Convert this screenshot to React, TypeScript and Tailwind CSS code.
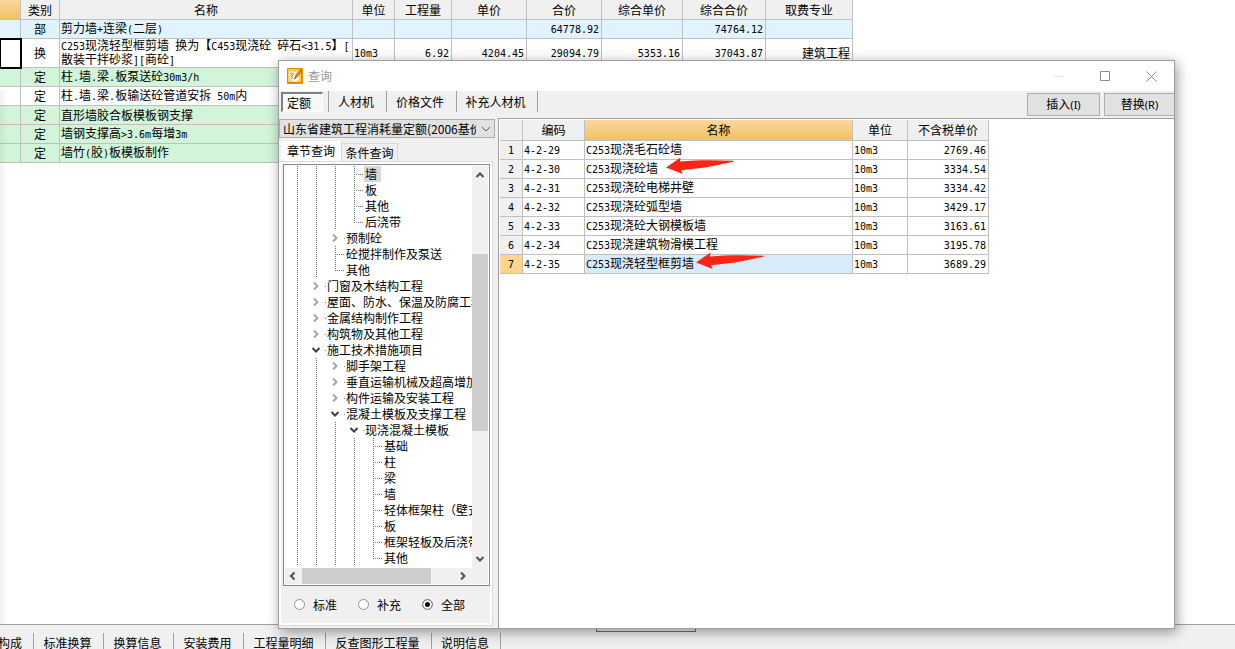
import { Fragment, useState } from 'react';

const columns = [
  { label: '', width: 'w-[21px]' },
  { label: '类别', width: 'w-[39px]' },
  { label: '名称', width: 'w-[293px]' },
  { label: '单位', width: 'w-[42px]' },
  { label: '工程量', width: 'w-[57px]' },
  { label: '单价', width: 'w-[75px]' },
  { label: '合价', width: 'w-[75px]' },
  { label: '综合单价', width: 'w-[81px]' },
  { label: '综合合价', width: 'w-[83px]' },
  { label: '取费专业', width: 'w-[87px]' },
];

const budgetRows = [
  { bg: 'bg-[#e1f3ff]', cells: ['部', '剪力墙+连梁(二层)', '', '', '', '64778.92', '', '74764.12', ''] },
  {
    bg: 'bg-white',
    tall: true,
    cells: ['换', 'C253现浇轻型框剪墙 换为【C453现浇砼 碎石<31.5】[散装干拌砂浆][商砼]', '10m3', '6.92', '4204.45', '29094.79', '5353.16', '37043.87', '建筑工程'],
  },
  { bg: 'bg-[#d2f4d9]', cells: ['定', '柱.墙.梁.板泵送砼30m3/h', '', '', '', '', '', '', ''] },
  { bg: 'bg-white', cells: ['定', '柱.墙.梁.板输送砼管道安拆 50m内', '', '', '', '', '', '', ''] },
  { bg: 'bg-[#d2f4d9]', cells: ['定', '直形墙胶合板模板钢支撑', '', '', '', '', '', '', ''] },
  { bg: 'bg-[#d2f4d9]', cells: ['定', '墙钢支撑高>3.6m每增3m', '', '', '', '', '', '', ''] },
  { bg: 'bg-[#d2f4d9]', cells: ['定', '墙竹(胶)板模板制作', '', '', '', '', '', '', ''] },
];

type Kind = 'leaf' | 'last' | 'closed' | 'open';
type TreeNode = { label: string; depth: number; kind: Kind; selected?: boolean };

const tree: TreeNode[] = [
  { label: '墙', depth: 4, kind: 'leaf', selected: true },
  { label: '板', depth: 4, kind: 'leaf' },
  { label: '其他', depth: 4, kind: 'leaf' },
  { label: '后浇带', depth: 4, kind: 'last' },
  { label: '预制砼', depth: 3, kind: 'closed' },
  { label: '砼搅拌制作及泵送', depth: 3, kind: 'leaf' },
  { label: '其他', depth: 3, kind: 'last' },
  { label: '门窗及木结构工程', depth: 2, kind: 'closed' },
  { label: '屋面、防水、保温及防腐工程', depth: 2, kind: 'closed' },
  { label: '金属结构制作工程', depth: 2, kind: 'closed' },
  { label: '构筑物及其他工程', depth: 2, kind: 'closed' },
  { label: '施工技术措施项目', depth: 2, kind: 'open' },
  { label: '脚手架工程', depth: 3, kind: 'closed' },
  { label: '垂直运输机械及超高增加', depth: 3, kind: 'closed' },
  { label: '构件运输及安装工程', depth: 3, kind: 'closed' },
  { label: '混凝土模板及支撑工程', depth: 3, kind: 'open' },
  { label: '现浇混凝土模板', depth: 4, kind: 'open' },
  { label: '基础', depth: 5, kind: 'leaf' },
  { label: '柱', depth: 5, kind: 'leaf' },
  { label: '梁', depth: 5, kind: 'leaf' },
  { label: '墙', depth: 5, kind: 'leaf' },
  { label: '轻体框架柱（壁式柱）', depth: 5, kind: 'leaf' },
  { label: '板', depth: 5, kind: 'leaf' },
  { label: '框架轻板及后浇带', depth: 5, kind: 'leaf' },
  { label: '其他', depth: 5, kind: 'last' },
];

const quotaRows = [
  { code: '4-2-29', name: 'C253现浇毛石砼墙', price: '2769.46' },
  { code: '4-2-30', name: 'C253现浇砼墙', price: '3334.54', arrow: 'left-[80px]' },
  { code: '4-2-31', name: 'C253现浇砼电梯井壁', price: '3334.42' },
  { code: '4-2-32', name: 'C253现浇砼弧型墙', price: '3429.17' },
  { code: '4-2-33', name: 'C253现浇砼大钢模板墙', price: '3163.61' },
  { code: '4-2-34', name: 'C253现浇建筑物滑模工程', price: '3195.78' },
  { code: '4-2-35', name: 'C253现浇轻型框剪墙', price: '3689.29', arrow: 'left-[110px]' },
];

const toolTabs = [
  { label: '人材机', width: 'w-[58px]' },
  { label: '价格文件', width: 'w-[70px]' },
  { label: '补充人材机', width: 'w-[81px]' },
];

const bottomTabs = [
  { label: '标准换算', width: 'w-[70px]' },
  { label: '换算信息', width: 'w-[70px]' },
  { label: '安装费用', width: 'w-[70px]' },
  { label: '工程量明细', width: 'w-[82px]' },
  { label: '反查图形工程量', width: 'w-[106px]' },
  { label: '说明信息', width: 'w-[69px]' },
];

// half-width characters take exactly half of a 12px ideograph
function Mixed({ text }: { text: string }) {
  return (
    <>
      {text.split(/([\x20-\x7e]+)/).map((part, i) =>
        i % 2 ? (
          <span key={i} className="font-['DejaVu_Sans_Mono',monospace] text-[10px]">{part}</span>
        ) : (
          <Fragment key={i}>{part}</Fragment>
        )
      )}
    </>
  );
}

function BudgetTable() {
  return (
    <table className="w-[853px] table-fixed border-separate border-spacing-0">
      <thead>
        <tr className="h-[20px]">
          {columns.map((col, i) => (
            <th
              key={i}
              className={`${col.width} border-r border-b border-[#c0c0c0] p-0 font-normal ${
                i === 0 ? 'bg-linear-to-b from-[#fad79c] to-[#f2c161]' : 'bg-[#f0f0f0]'
              }`}
            >
              {col.label}
            </th>
          ))}
        </tr>
      </thead>
      <tbody>
        {budgetRows.map((row, r) => (
          <tr key={r} className={`${row.tall ? 'h-[29px]' : 'h-[19px]'} ${row.bg}`}>
            <td className={`border-r border-b border-[#c0c0c0] p-0 ${row.tall ? 'outline-2 -outline-offset-1 outline-black' : ''}`} />
            {row.cells.map((cell, i) => (
              <td
                key={i}
                className={`border-r border-b border-[#c0c0c0] py-0 ${
                  row.tall && i === 1 ? 'leading-[12px] [line-break:anywhere]' : 'leading-[14px] whitespace-nowrap'
                } ${i === 0 ? 'px-0 text-center' : i > 2 ? 'px-[2px] text-right' : 'px-px'}`}
              >
                <Mixed text={cell} />
              </td>
            ))}
          </tr>
        ))}
      </tbody>
    </table>
  );
}

function Chevron({ dir, className = '' }: { dir: 'up' | 'down' | 'left' | 'right'; className?: string }) {
  const paths = {
    up: 'M1.5 7 5 3.5 8.5 7',
    down: 'M1.5 3 5 6.5 8.5 3',
    left: 'M6.5 1.5 3 5 6.5 8.5',
    right: 'M3 1.5 6.5 5 3 8.5',
  };
  return (
    <svg viewBox="0 0 10 10" className={`size-[10px] shrink-0 ${className}`} fill="none" stroke="currentColor" strokeWidth="2">
      <path d={paths[dir]} />
    </svg>
  );
}

function Guide({ kind }: { kind: Kind | 'line' }) {
  if (kind === 'closed' || kind === 'open') {
    return (
      <span className="flex w-[19px] shrink-0 items-center justify-between pl-[4px]">
        <Chevron dir={kind === 'open' ? 'down' : 'right'} className={kind === 'open' ? 'text-[#404040]' : 'text-[#a6a6a6]'} />
        <span className="size-px bg-[#808080]" />
      </span>
    );
  }
  return (
    <svg width="19" height="16" className="shrink-0" fill="none" stroke="#707070" strokeDasharray="1 1">
      <path d={kind === 'last' ? 'M9.5 0V8' : 'M9.5 0V16'} />
      {kind !== 'line' && <path d="M9 8.5H18" />}
    </svg>
  );
}

function QuotaTree() {
  return (
    <div className="flex min-h-0 flex-1 flex-col border border-[#828790] bg-white p-px">
      <div className="flex min-h-0 flex-1">
        <ul className="min-w-0 flex-1 overflow-hidden pl-[3px]">
          {tree.map((node, i) => (
            <li key={i} className="flex h-[16px] whitespace-nowrap">
              {Array.from({ length: node.depth - 1 }, (_, g) => (
                <Guide key={g} kind="line" />
              ))}
              <Guide kind={node.kind} />
              <span className={`pr-[4px] pl-px leading-[16px] ${node.selected ? 'bg-[#d9d9d9]' : ''}`}>{node.label}</span>
            </li>
          ))}
        </ul>
        <div className="flex w-[16px] flex-col items-center bg-[#f0f0f0] py-[4px] text-[#505050]">
          <Chevron dir="up" />
          <div className="flex min-h-0 w-full flex-1 flex-col pt-[74px]">
            <div className="h-[70%] max-h-[177px] bg-[#cdcdcd]" />
          </div>
          <Chevron dir="down" />
        </div>
      </div>
      <div className="flex h-[16px] items-center bg-[#f0f0f0] pr-[20px] pl-[3px] text-[#505050]">
        <Chevron dir="left" />
        <div className="flex h-full flex-1 pl-[4px]">
          <div className="h-full w-[129px] bg-[#cdcdcd]" />
        </div>
        <Chevron dir="right" />
      </div>
    </div>
  );
}

function RedArrow({ className }: { className: string }) {
  return (
    <svg viewBox="0 0 70 18" className={`absolute top-[-3px] h-[18px] w-[70px] ${className}`} fill="#ff2413">
      <path d="M1 10.5 15.5 .5 15 4.4C32 3 50 3 68 3.8L68.500 4.800C58 6.600 50 9 38 10.800L16 13.300 17.600 17Z" />
    </svg>
  );
}

function QuotaTable() {
  const cell = 'border-r border-b border-[#c0c0c0] py-0 leading-[14px]';
  return (
    <table className="w-[489px] table-fixed border-separate border-spacing-0">
      <thead>
        <tr className="h-[21px] bg-[#f0f0f0]">
          <th className={`${cell} w-[23px]`} />
          <th className={`${cell} w-[62px] px-0 font-normal`}>编码</th>
          <th className={`${cell} w-[268px] bg-linear-to-b from-[#fad79c] to-[#f2c161] px-0 font-normal`}>名称</th>
          <th className={`${cell} w-[55px] px-0 font-normal`}>单位</th>
          <th className={`${cell} w-[81px] px-0 font-normal`}>不含税单价</th>
        </tr>
      </thead>
      <tbody>
        {quotaRows.map((row, i) => {
          const active = i === quotaRows.length - 1;
          return (
            <tr key={row.code} className="h-[19px]">
              <td className={`${cell} px-0 text-center ${active ? 'bg-[#ffd58d]' : 'bg-[#f0f0f0]'}`}>
                <Mixed text={String(i + 1)} />
              </td>
              <td className={`${cell} px-px`}><Mixed text={row.code} /></td>
              <td className={`${cell} relative px-px ${active ? 'bg-[#d9eaf9]' : ''}`}>
                <Mixed text={row.name} />
                {row.arrow && <RedArrow className={row.arrow} />}
              </td>
              <td className={`${cell} px-px`}><Mixed text="10m3" /></td>
              <td className={`${cell} px-[2px] text-right`}><Mixed text={row.price} /></td>
            </tr>
          );
        })}
      </tbody>
    </table>
  );
}

function AppIcon() {
  return (
    <svg viewBox="0 0 16 16" className="size-[16px]">
      <rect width="16" height="16" rx="1" fill="#d98a0c" />
      <rect x="1" y="1" width="13" height="13" fill="#ffcf3a" />
      <path d="M2 4.500 5 3 7.500 4 10.500 3 12 4v7.500L9 13.500 4 13 2.500 11Z" fill="#fffbe8" />
      <path d="M3 5.500 4.500 6.500M3.500 9 6 7.500M5 4.500 6.500 7M4 11.500 6 9.500" stroke="#b0622a" fill="none" />
      <path d="M13.500 1.500 9.500 6 7.500 11 11 8 14 3Z" fill="#f3a01c" stroke="#8a3c08" strokeWidth=".7" />
      <path d="M.5 15.500h15V2" fill="none" stroke="#f08c00" />
    </svg>
  );
}

function QueryDialog() {
  const [scope, setScope] = useState('全部');

  return (
    <section
      role="dialog"
      aria-label="查询"
      className="absolute top-[60px] right-[60px] bottom-[20px] left-[278px] flex flex-col border border-[#a0a0a0] bg-[#f0f0f0] shadow-[2px_3px_12px_rgba(0,0,0,0.4)]"
    >
      <header className="flex h-[30px] shrink-0 items-center bg-white pl-[8px]">
        <AppIcon />
        <h1 className="flex-1 pl-[5px] text-[#999999]">查询</h1>
        <div className="flex text-[#8c8c8c]">
          <button type="button" aria-label="最小化" className="flex w-[46px] items-center justify-center">
            <svg width="11" height="11" stroke="#e2e2e2"><path d="M0 5.5h10" /></svg>
          </button>
          <button type="button" aria-label="最大化" className="flex w-[46px] items-center justify-center">
            <svg width="11" height="11" fill="none" stroke="currentColor"><path d="M.5 .5h9v9h-9Z" /></svg>
          </button>
          <button type="button" aria-label="关闭" className="flex w-[46px] items-center justify-center">
            <svg width="11" height="11" fill="none" stroke="currentColor"><path d="M.5 .5l10 10M10.5 .5l-10 10" /></svg>
          </button>
        </div>
      </header>

      <div className="flex h-[27px] shrink-0">
        <div className="flex h-[21px] flex-1">
          <div className="border-r border-[#a0a0a0] pt-px pr-[5px] pl-[2px]">
            <button type="button" className="flex h-[20px] w-[42px] items-center justify-start border-t-2 border-r border-b border-l-2 border-[#808080] border-r-white border-b-white bg-[#f8f8f8] pl-[4px]">
              定额
            </button>
          </div>
          {toolTabs.map((tab) => (
            <button key={tab.label} type="button" className={`${tab.width} border-r border-[#a0a0a0] pr-[3px] text-center`}>
              {tab.label}
            </button>
          ))}
        </div>
        <div className="flex items-center gap-[4px]">
          <button type="button" className="h-[23px] w-[73px] border border-[#adadad] bg-[#e1e1e1]">
            插入<span className="font-['Noto_Sans',sans-serif] text-[11px]">(I)</span>
          </button>
          <button type="button" className="h-[23px] w-[70px] border border-r-0 border-[#adadad] bg-[#e1e1e1]">
            替换<span className="font-['Noto_Sans',sans-serif] text-[11px]">(R)</span>
          </button>
        </div>
      </div>

      <div className="flex min-h-0 flex-1">
        <div className="flex w-[219px] shrink-0 flex-col pr-[3px]">
          <div className="relative mt-px flex h-[19px] shrink-0">
            <select
              aria-label="定额库"
              className="w-full appearance-none overflow-hidden border border-[#adadad] bg-[#e1e1e1] pr-[18px] pl-[3px] text-[12px] leading-[17px]"
            >
              <option>山东省建筑工程消耗量定额(2006基价)</option>
            </select>
            <svg viewBox="0 0 10 10" className="pointer-events-none absolute top-[5px] right-[4px] size-[10px]" fill="none" stroke="#606060">
              <path d="M1 3 5 7 9 3" />
            </svg>
          </div>
          <div className="mt-[3px] flex h-[20px] shrink-0 items-end pl-[2px]">
            <button type="button" className="h-[20px] w-[61px] border-r border-[#d9d9d9] bg-white">章节查询</button>
            <button type="button" className="h-[18px] w-[56px] border-t border-r border-[#d9d9d9]">条件查询</button>
          </div>
          <div className="mr-[2px] mb-[2px] flex min-h-0 flex-1 flex-col border-t border-r border-b border-[#d9d9d9] bg-white px-[2px] pt-[2px] pb-[2px]">
            <div className="flex min-h-0 flex-1 flex-col bg-[#f0f0f0] pl-[2px]">
              <QuotaTree />
              <div className="flex h-[37px] shrink-0 items-center gap-[21px] pl-[11px]">
                {['标准', '补充', '全部'].map((item) => (
                  <label key={item} className="flex items-center gap-[8px]">
                    <input
                      type="radio"
                      name="scope"
                      checked={scope === item}
                      onChange={() => setScope(item)}
                      className="size-[11px] appearance-none rounded-full border border-[#909090] bg-white checked:bg-black checked:shadow-[inset_0_0_0_2px_#fff]"
                    />
                    {item}
                  </label>
                ))}
              </div>
            </div>
          </div>
        </div>
        <div className="min-w-0 flex-1 overflow-hidden border-t border-l border-[#a0a0a0] bg-white pt-px pl-px">
          <QuotaTable />
        </div>
      </div>
    </section>
  );
}

export default function App() {
  return (
    <main className="relative flex h-screen flex-col overflow-hidden bg-white font-['Noto_Sans_CJK_SC',sans-serif] text-[12px] leading-[14px] text-black">
      <div className="min-h-0 flex-1 overflow-hidden">
        <BudgetTable />
      </div>
      <div className="pointer-events-none absolute top-[90px] bottom-[25px] left-0 w-[8px] bg-linear-to-r from-black/5 to-transparent" />
      <nav className="flex h-[25px] shrink-0 overflow-hidden border-t border-[#a0a0a0] bg-[#f0f0f0] pt-[8px]">
        <button type="button" className="flex h-[20px] w-[34px] shrink-0 items-center justify-end overflow-hidden border-r border-[#a0a0a0] pr-[11px] whitespace-nowrap">
          构成
        </button>
        {bottomTabs.map((tab) => (
          <button key={tab.label} type="button" className={`${tab.width} h-[20px] shrink-0 border-r border-[#a0a0a0] pr-[2px]`}>
            {tab.label}
          </button>
        ))}
      </nav>
      <div className="absolute bottom-[17px] left-[596px] h-[8px] w-[100px] border border-[#707070] bg-[#f0f0f0]" />
      <QueryDialog />
    </main>
  );
}
